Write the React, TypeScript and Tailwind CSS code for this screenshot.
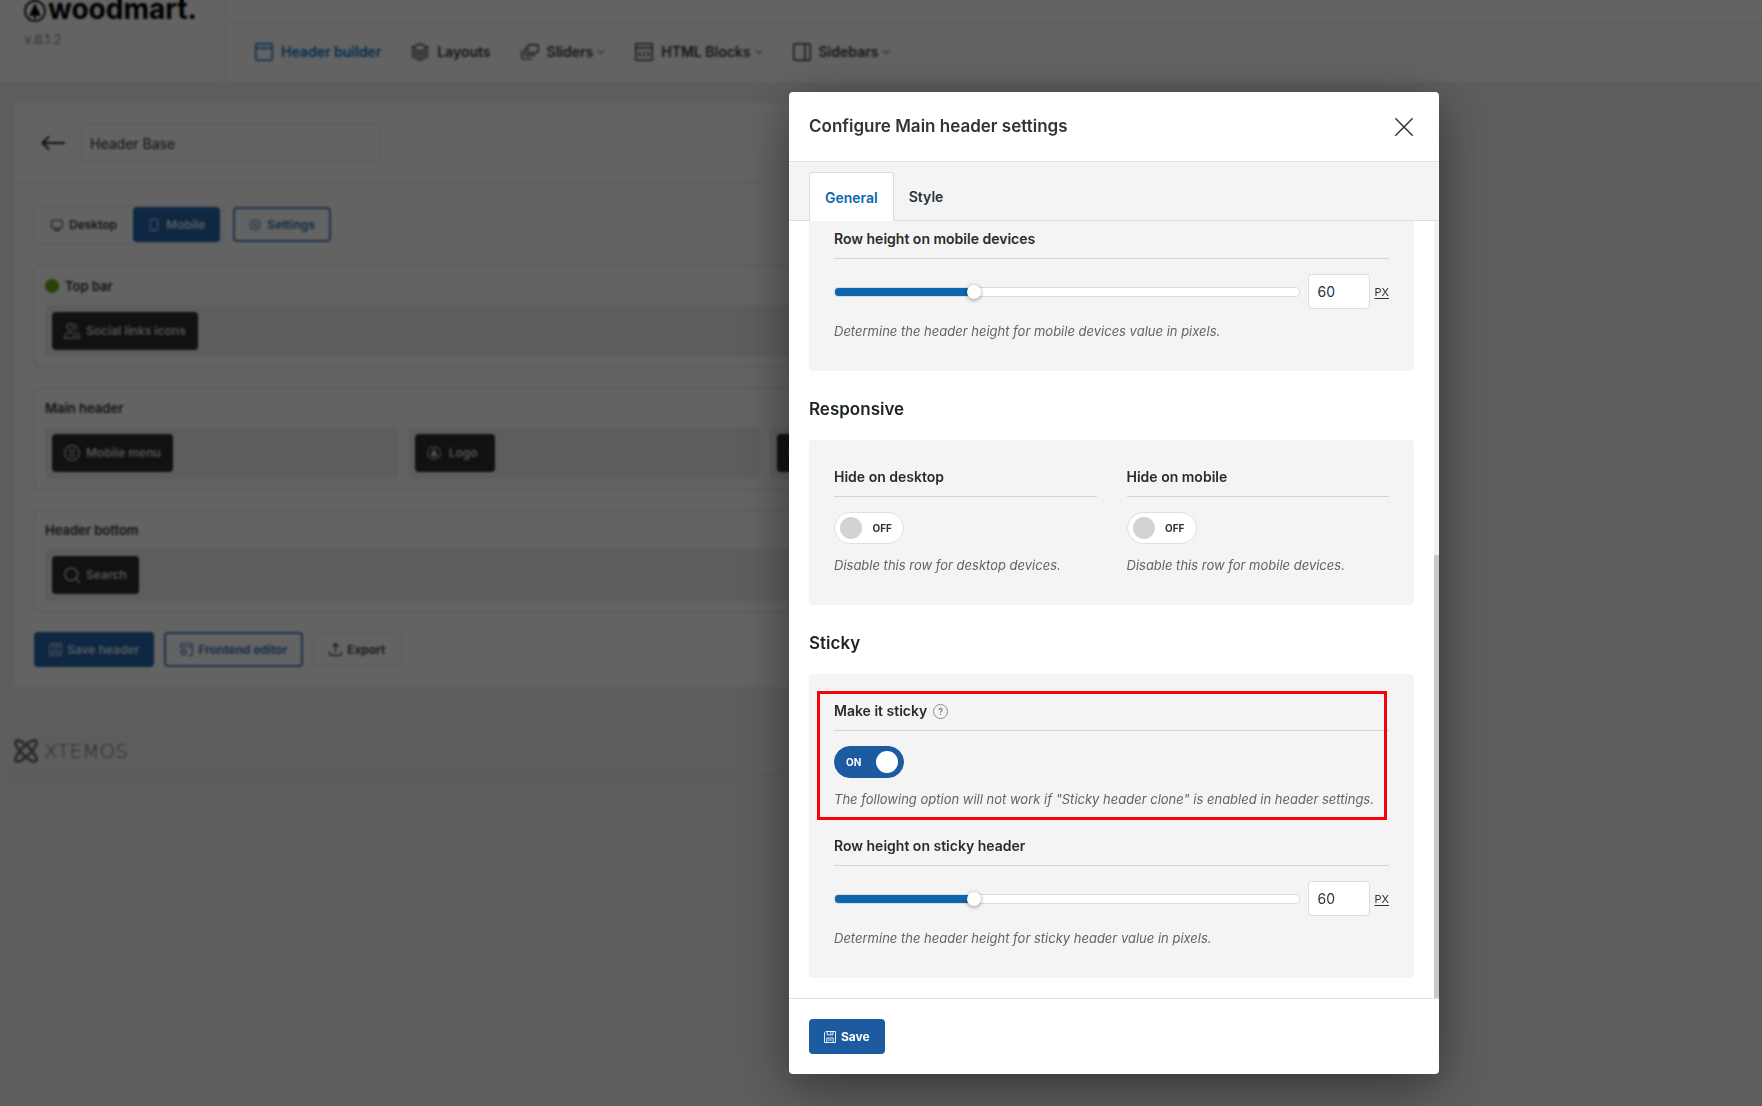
import { useState, type ReactNode } from "react";

type IconProps = { className?: string };

function Svg({ className, box = 18, stroke = 1.5, children }: { className?: string; box?: number; stroke?: number; children: ReactNode }) {
  return (
    <svg
      aria-hidden="true"
      className={className}
      viewBox={`0 0 ${box} ${box}`}
      fill="none"
      stroke="currentColor"
      strokeWidth={stroke}
      strokeLinecap="round"
      strokeLinejoin="round"
    >
      {children}
    </svg>
  );
}

const WindowIcon = (p: IconProps) => (
  <Svg {...p}>
    <rect x="0.75" y="0.75" width="16.5" height="16.5" rx="1.5" />
    <path d="M1 5h16" />
  </Svg>
);
const LayersIcon = (p: IconProps) => (
  <Svg {...p} stroke={1.3}>
    <path d="M9 .8 17.2 4.700 9 8.700.8 4.700z" />
    <path d="M.8 7.700 9 11.600l8.200-3.900" />
    <path d="M.8 10.700 9 14.500l8.200-3.800" />
    <path d="M.8 13.500 9 17.300l8.200-3.800" />
  </Svg>
);
const SlidersIcon = (p: IconProps) => (
  <Svg {...p} stroke={1.4}>
    <rect x="6.500" y="1.800" width="10.800" height="7.800" rx="1.800" />
    <path d="M3.800 5v5.800a1.500 1.500 0 0 0 1.500 1.500h8.400" />
    <path d="M.8 7.800v6.300a1.800 1.800 0 0 0 1.800 1.800h7.600" />
  </Svg>
);
const CodeWindowIcon = (p: IconProps) => (
  <Svg {...p} stroke={1.5}>
    <rect x="0.75" y="0.75" width="16.5" height="16.5" rx="1.5" />
    <path d="M1 4.800h16" />
    <path d="m5.600 9-2 2 2 2M12.400 9l2 2-2 2M9.800 8.600l-1.600 4.800" strokeWidth="1.400" />
  </Svg>
);
const SidebarIcon = (p: IconProps) => (
  <Svg {...p}>
    <rect x="0.75" y="0.75" width="16.5" height="16.5" rx="1.5" />
    <path d="M12 1v16" />
  </Svg>
);
const ChevronIcon = (p: IconProps) => (
  <Svg {...p} box={8} stroke={1.1}>
    <path d="m.8 2.400 3.200 3.200 3.200-3.200" />
  </Svg>
);
const MonitorIcon = (p: IconProps) => (
  <Svg {...p} box={12} stroke={1.100}>
    <rect x="0.6" y="1.200" width="10.800" height="7.800" rx="1" />
    <path d="M3.500 11.200h5" strokeWidth="1.500" />
  </Svg>
);
const PhoneIcon = (p: IconProps) => (
  <Svg {...p} box={12} stroke={1}>
    <rect x="2.200" y="0.500" width="7.600" height="11" rx="1" />
    <path d="M5.300 10.200h1.400" />
  </Svg>
);
const GearIcon = (p: IconProps) => (
  <Svg {...p} box={12} stroke={1}>
    <path d="M6 .6 7.800 2l2.200-.1.500 2.200L11.400 6l-.9 1.900-.5 2.200-2.200-.1L6 11.400 4.200 10 2 10.100l-.5-2.200L.6 6l.9-1.900L2 1.900l2.200.1z" />
    <circle cx="6" cy="6" r="1.900" />
  </Svg>
);
const UsersIcon = (p: IconProps) => (
  <Svg {...p} box={16} stroke={1.200}>
    <circle cx="6" cy="3.800" r="3" />
    <path d="M.7 15.200v-1.400a4.200 4.200 0 0 1 4.200-4.200h2.200a4.200 4.200 0 0 1 4.200 4.200v1.400z" />
    <path d="M10.600 1a3 3 0 0 1 0 5.600M12.400 9.700a4.200 4.200 0 0 1 2.900 4v1.500h-1.600" />
  </Svg>
);
const MenuCircleIcon = (p: IconProps) => (
  <Svg {...p} box={16} stroke={1.200}>
    <circle cx="8" cy="8" r="7.300" />
    <path d="M5.400 5.200h5.200M5.400 8h5.200M5.400 10.800h5.200" />
  </Svg>
);
const SearchIcon = (p: IconProps) => (
  <Svg {...p} box={16} stroke={1.300}>
    <circle cx="7.200" cy="7.200" r="6.400" />
    <path d="m12 12 3.300 3.300" />
  </Svg>
);
const TreeIcon = (p: IconProps) => (
  <Svg {...p} box={22} stroke={1.600}>
    <circle cx="11" cy="11" r="10" />
    <path d="M11 3.200 16.800 15.800h-4.900v3.400h-1.800v-3.400H5.200z" fill="currentColor" stroke="none" />
  </Svg>
);
const SaveIcon = (p: IconProps) => (
  <Svg {...p} box={12} stroke={0.9}>
    <path d="M2.200.5h9.300v11H.5V2.200z" />
    <path d="M3.200.8v3h5.800v-3M2.800 11.300V7h6.400v4.300M6.800 1.400v1M4.500 9h3" />
  </Svg>
);
const FrontendIcon = (p: IconProps) => (
  <Svg {...p} box={12} stroke={1}>
    <path d="M.5 4.500v-3a1 1 0 0 1 1-1h9a1 1 0 0 1 1 1v9a1 1 0 0 1-1 1H8M.6 3.200h10.800" />
    <circle cx="3.200" cy="8.300" r="2.100" />
    <path d="M3.200 5.400v.8M3.200 10.400v.8M.5 8.300h.7M5.200 8.300h.8" />
  </Svg>
);
const ExportIcon = (p: IconProps) => (
  <Svg {...p} box={12} stroke={1.100}>
    <path d="M6 8V.8M3.500 3.100 6 .7l2.500 2.400M.6 8.500v1.800a1.100 1.100 0 0 0 1.100 1.100h8.600a1.100 1.100 0 0 0 1.100-1.100V8.500" />
  </Svg>
);
const ArrowLeftIcon = (p: IconProps) => (
  <Svg {...p} box={24} stroke={2}>
    <path d="M23 12H1.500M7.500 6l-6 6 6 6" />
  </Svg>
);
const CloseIcon = (p: IconProps) => (
  <Svg {...p} stroke={1.500}>
    <path d="m.8.800 16.400 16.400M17.200.800.8 17.200" />
  </Svg>
);
const XtemosIcon = (p: IconProps) => (
  <Svg {...p} box={24} stroke={2.800}>
    <ellipse cx="12" cy="12" rx="14.200" ry="4.600" transform="rotate(45 12 12)" />
    <ellipse cx="12" cy="12" rx="14.200" ry="4.600" transform="rotate(-45 12 12)" />
  </Svg>
);

function XtemosLogo() {
  return (
    <div className="flex items-center gap-1.5 text-[#6e6e6e]">
      <XtemosIcon className="size-6" />
      <span className="font-['DejaVu_Sans',sans-serif] text-xl leading-6 font-extralight">XTEMOS</span>
    </div>
  );
}

function NavItem({ icon, label, active, menu }: { icon: ReactNode; label: string; active?: boolean; menu?: boolean }) {
  return (
    <a href="#" className={`flex items-center gap-2 text-sm font-semibold ${active ? "text-[#0b74c0]" : "text-[#3c3c3c]"}`}>
      {icon}
      <span>{label}</span>
      {menu && <ChevronIcon className="-ml-1 size-2 text-[#777]" />}
    </a>
  );
}

function Chip({ icon, label }: { icon: ReactNode; label: string }) {
  return (
    <button type="button" className="flex h-[38px] min-w-20 items-center gap-1.5 rounded bg-[#2a2d31] px-3 text-xs font-semibold text-[#cfcfcf]">
      {icon}
      {label}
    </button>
  );
}

function BuilderRow({ title, dot, columns }: { title: string; dot?: boolean; columns: ReactNode[] }) {
  return (
    <section className="rounded border border-[#dfdfdf] p-2.5">
      <h3 className="flex items-center gap-1.5 text-[13px] leading-[18px] font-semibold text-[#33363a]">
        {dot && <span className="size-3.5 rounded-full bg-[#6fa81c]" />}
        {title}
      </h3>
      <div className="mt-2.5 flex gap-2.5">
        {columns.map((c, i) => (
          <div key={i} className="flex h-[52px] flex-1 items-center rounded bg-[#efefef] px-[7px]">
            {c}
          </div>
        ))}
      </div>
    </section>
  );
}

function Page() {
  return (
    <div className="min-h-screen bg-[#f0f0f0]">
      <header className="flex h-[82px] bg-white">
        <div className="w-[225px] shrink-0 border-r border-[#ebebeb] pl-6">
          <div className="-mt-[7px] flex items-center gap-0.5 text-black">
            <TreeIcon className="mt-1 size-[22px]" />
            <span className="text-[28px] leading-8 font-bold">woodmart.</span>
          </div>
          <p className="mt-1 text-[13px] leading-5 text-[#8a8a8a]">v.8.1.2</p>
        </div>
        <div className="flex-1">
          <div className="h-[22px] border-b border-[#ebebeb]" />
          <nav aria-label="Theme" className="flex h-[60px] items-center gap-[30px] pl-[30px]">
            <NavItem active icon={<WindowIcon className="size-[18px]" />} label="Header builder" />
            <NavItem icon={<LayersIcon className="size-[18px]" />} label="Layouts" />
            <NavItem menu icon={<SlidersIcon className="size-[18px]" />} label="Sliders" />
            <NavItem menu icon={<CodeWindowIcon className="size-[18px]" />} label="HTML Blocks" />
            <NavItem menu icon={<SidebarIcon className="size-[18px]" />} label="Sidebars" />
          </nav>
        </div>
      </header>

      <main className="max-w-[1154px] pt-[21px] pl-3.5">
        <div className="rounded-md bg-white">
          <div className="flex h-[81px] items-center gap-4 border-b border-[#ebebeb] pl-[27px]">
            <a href="#" aria-label="Back" className="text-[#2c2c2c]">
              <ArrowLeftIcon className="size-6" />
            </a>
            <input
              aria-label="Header name"
              defaultValue="Header Base"
              className="h-[38px] w-[300px] rounded border border-[#e2e2e2] px-2 text-sm text-[#2c3338]"
            />
          </div>
          <div className="p-5">
            <div className="mt-px flex items-center gap-2.5 text-xs font-semibold">
              <div className="flex h-[39px] items-center rounded border border-[#ebebeb] pr-0.5">
                <button type="button" className="flex h-[35px] items-center gap-1.5 px-4 text-[#3c3c3c]">
                  <MonitorIcon className="size-3" />
                  Desktop
                </button>
                <button type="button" className="flex h-[35px] items-center gap-1.5 rounded bg-[#2564ab] px-[15px] text-[#d8e4f2]">
                  <PhoneIcon className="size-3" />
                  Mobile
                </button>
              </div>
              <button type="button" className="flex h-[35px] items-center gap-1.5 rounded border-2 border-[#4c86c4] px-3.5 text-[#2f6fb4]">
                <GearIcon className="size-3" />
                Settings
              </button>
            </div>
            <div className="mt-[22px] flex flex-col gap-5">
              <BuilderRow dot title="Top bar" columns={[<Chip icon={<UsersIcon className="size-4" />} label="Social links icons" />]} />
              <BuilderRow
                title="Main header"
                columns={[
                  <Chip icon={<MenuCircleIcon className="size-4" />} label="Mobile menu" />,
                  <Chip icon={<TreeIcon className="mr-0.5 size-3.5" />} label="Logo" />,
                  <Chip icon={<MenuCircleIcon className="size-4" />} label="Cart" />,
                ]}
              />
              <BuilderRow title="Header bottom" columns={[<Chip icon={<SearchIcon className="size-4" />} label="Search" />]} />
            </div>
            <div className="mt-5 flex gap-2.5 text-xs font-semibold">
              <button type="button" className="flex h-[35px] items-center gap-[5px] rounded bg-[#2564ab] px-[15px] text-[#d8e4f2]">
                <SaveIcon className="size-[13px]" />
                Save header
              </button>
              <button type="button" className="flex h-[35px] items-center gap-[5px] rounded border-2 border-[#4c86c4] px-3.5 text-[#2f6fb4]">
                <FrontendIcon className="size-[13px]" />
                Frontend editor
              </button>
              <button type="button" className="flex h-[35px] items-center gap-[5px] rounded border border-[#ebebeb] px-[15px] text-[#3c3c3c]">
                <ExportIcon className="size-[13px]" />
                Export
              </button>
            </div>
          </div>
        </div>
        <footer className="mt-[52px] border-b border-[#dcdcdc] pb-3">
          <XtemosLogo />
        </footer>
      </main>
    </div>
  );
}

function Field({ label, htmlFor, help, note, children }: { label: string; htmlFor: string; help?: boolean; note: string; children: ReactNode }) {
  return (
    <div className="min-w-0 flex-1">
      <div className="flex items-center gap-1.5 border-b border-[#d5d5d5] pb-[9px] text-sm leading-5 font-semibold text-[#2a2b2d]">
        <label htmlFor={htmlFor}>{label}</label>
        {help && (
          <button type="button" aria-label="Help" className="flex size-[15px] items-center justify-center rounded-full border border-[#8c8f94] text-[9px] leading-none font-semibold text-[#777]">
            ?
          </button>
        )}
      </div>
      <div className="mt-[15px]">{children}</div>
      <p className="mt-[11px] text-[13px] leading-5 text-[#5f656b] italic">{note}</p>
    </div>
  );
}

const SLIDER_MAX = 200;

function RangeControl({ id }: { id: string }) {
  const [value, setValue] = useState(60);
  const fill = `${(value / SLIDER_MAX) * 100}%`;
  return (
    <div className="flex items-center pb-px">
      <input
        id={id}
        type="range"
        min={2}
        max={SLIDER_MAX}
        value={value}
        onChange={(e) => setValue(Number(e.target.value))}
        className="h-2.5 min-w-0 flex-1 appearance-none rounded border border-[#ddd] bg-white [&::-webkit-slider-thumb]:size-3.5 [&::-webkit-slider-thumb]:appearance-none [&::-webkit-slider-thumb]:rounded-full [&::-webkit-slider-thumb]:bg-white [&::-webkit-slider-thumb]:shadow-[0_1px_4px_rgba(0,0,0,0.4)]"
        style={{ backgroundImage: `linear-gradient(to right, #0e67ae ${fill}, #fff ${fill})` }}
      />
      <input
        aria-label="Value in pixels"
        value={value}
        onChange={(e) => setValue(Number(e.target.value) || 0)}
        className="ml-2 h-[35px] w-[62px] rounded border border-[#ddd] bg-white px-2 text-sm text-[#2c3338]"
      />
      <button type="button" className="ml-1 text-[11px] leading-4 text-[#2c3338] underline underline-offset-2">
        PX
      </button>
    </div>
  );
}

function Toggle({ id, initial }: { id: string; initial: boolean }) {
  const [on, setOn] = useState(initial);
  return (
    <button
      id={id}
      type="button"
      role="switch"
      aria-checked={on}
      onClick={() => setOn(!on)}
      className={`flex h-8 w-[70px] items-center justify-between rounded-full border px-[5px] text-[10px] font-bold ${
        on ? "flex-row-reverse border-[#1c5ba0] bg-[#1c5ba0] text-white" : "border-[#e0e0e0] bg-white text-[#2c3338]"
      }`}
    >
      <span className={`size-[22px] rounded-full ${on ? "bg-white" : "bg-[#d3d3d5]"}`} />
      <span className="px-1.5">{on ? "ON" : "OFF"}</span>
    </button>
  );
}

function Panel({ children }: { children: ReactNode }) {
  return <div className="flex flex-col gap-[27px] rounded bg-[#f4f4f4] px-[25px] pt-[27px] pb-[30px]">{children}</div>;
}

function GroupTitle({ children }: { children: ReactNode }) {
  return <h3 className="pt-[26px] pb-[18px] text-[17px] leading-[25px] font-semibold text-[#1d2327]">{children}</h3>;
}

function Modal() {
  return (
    <div className="fixed inset-0 flex justify-center bg-black/61 pt-[92px] pb-8 pl-[466px] backdrop-blur-[1px]">
      <div
        role="dialog"
        aria-label="Configure Main header settings"
        className="flex w-[650px] flex-col overflow-hidden rounded bg-white shadow-[0_12px_50px_rgba(0,0,0,0.45)]"
      >
        <div className="flex h-[70px] shrink-0 items-center justify-between border-b border-[#e2e2e2] pr-[26px] pl-5">
          <h2 className="text-[17px] font-semibold text-[#333]">Configure Main header settings</h2>
          <button type="button" aria-label="Close" className="text-[#333]">
            <CloseIcon className="size-[18px]" />
          </button>
        </div>
        <div className="flex h-[59px] shrink-0 items-end border-b border-[#ddd] bg-[#f4f4f4] px-5 text-sm font-semibold" role="tablist">
          <button type="button" role="tab" aria-selected="true" className="-mb-px h-[49px] rounded-t border border-b-0 border-[#ddd] bg-white px-[15px] pt-0.5 text-[#0e67ae]">
            General
          </button>
          <button type="button" role="tab" aria-selected="false" className="h-12 px-[15px] pt-0.5 text-[#2c3338]">
            Style
          </button>
        </div>
        <div className="flex min-h-0 flex-1">
          <div className="flex min-w-0 flex-1 flex-col justify-end overflow-hidden px-5 pb-5">
            <Panel>
              <Field label="Row height on mobile devices" htmlFor="mobile-height" note="Determine the header height for mobile devices value in pixels.">
                <RangeControl id="mobile-height" />
              </Field>
            </Panel>
            <GroupTitle>Responsive</GroupTitle>
            <Panel>
              <div className="flex gap-[30px]">
                <Field label="Hide on desktop" htmlFor="hide-desktop" note="Disable this row for desktop devices.">
                  <Toggle id="hide-desktop" initial={false} />
                </Field>
                <Field label="Hide on mobile" htmlFor="hide-mobile" note="Disable this row for mobile devices.">
                  <Toggle id="hide-mobile" initial={false} />
                </Field>
              </div>
            </Panel>
            <GroupTitle>Sticky</GroupTitle>
            <Panel>
              <div className="relative">
                <Field
                  help
                  label="Make it sticky"
                  htmlFor="make-sticky"
                  note={'The following option will not work if "Sticky header clone" is enabled in header settings.'}
                >
                  <Toggle id="make-sticky" initial />
                </Field>
                <div className="pointer-events-none absolute -top-2.5 right-0.5 -bottom-[11px] -left-[17px] border-3 border-[#fb0007]" />
              </div>
              <Field label="Row height on sticky header" htmlFor="sticky-height" note="Determine the header height for sticky header value in pixels.">
                <RangeControl id="sticky-height" />
              </Field>
            </Panel>
          </div>
          <div className="flex w-[5px] shrink-0 flex-col justify-end bg-[#f1f1f1]">
            <div className="h-[57%] bg-[#c9c9c9]" />
          </div>
        </div>
        <div className="shrink-0 border-t border-[#e2e2e2] p-5">
          <button type="button" className="flex h-[35px] items-center gap-[5px] rounded bg-[#1c5ba0] px-[15px] text-xs font-bold text-white">
            <SaveIcon className="size-3" />
            Save
          </button>
        </div>
      </div>
    </div>
  );
}

export default function App() {
  return (
    <div className="font-['Inter',sans-serif]">
      <Page />
      <Modal />
    </div>
  );
}
